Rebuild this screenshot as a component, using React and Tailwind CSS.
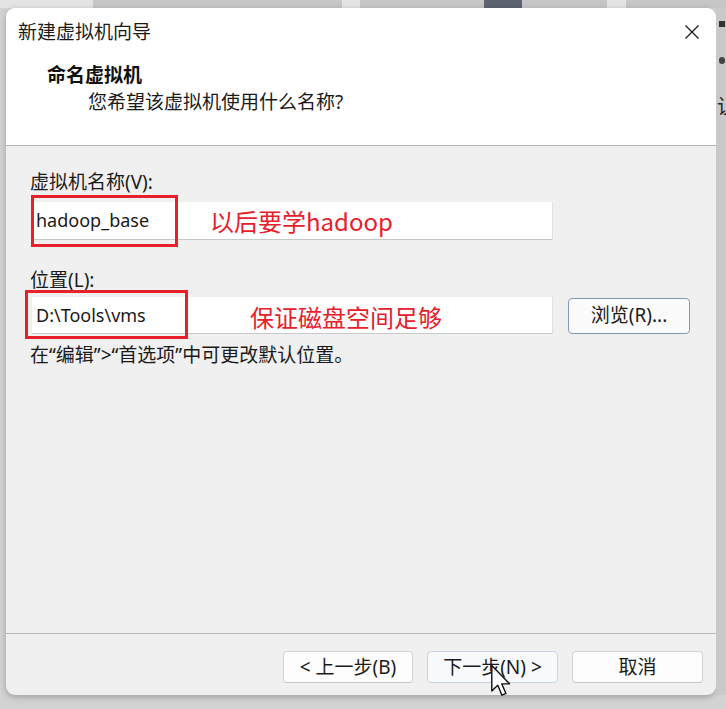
import React from "react";

const font = {
  fontFamily: '"Noto Sans", "Noto Sans CJK SC", sans-serif',
};

function Cursor() {
  return (
    <svg
      width="22"
      height="34"
      viewBox="0 0 15 24"
      className="absolute left-[490px] top-[664px]"
    >
      <path
        d="M1 1 L1 19 L5.2 15 L8.2 22 L11 20.8 L8 14 L13.5 14 Z"
        fill="#ffffff"
        stroke="#111111"
        strokeWidth="1"
        strokeLinejoin="round"
      />
    </svg>
  );
}

function FooterButton({ children, primary }) {
  return (
    <button
      className={
        primary
          ? "h-[32px] rounded-[4px] border border-[#c9d3df] bg-[#f7f9fc] text-[19px] text-[#1a1a1a] leading-none"
          : "h-[32px] rounded-[4px] border border-[#d3d3d3] border-b-[#c4c4c4] bg-[#fdfdfd] text-[19px] text-[#1a1a1a] leading-none"
      }
      style={font}
    >
      {children}
    </button>
  );
}

export default function App() {
  return (
    <div
      className="relative w-[726px] h-[709px] overflow-hidden bg-[#d3d3d3] flex flex-col"
      style={font}
    >
      {/* window behind the dialog */}
      <div className="h-[8px] flex bg-[#e4e4e4]">
        <div className="w-[93px]" />
        <div className="w-[249px] bg-[#c6c6c6]" />
        <div className="w-[18px]" />
        <div className="w-[247px] bg-[#c6c6c6] flex">
          <div className="w-[124px]" />
          <div className="w-[38px] bg-[#5c6270]" />
        </div>
        <div className="w-[19px]" />
        <div className="flex-1 bg-[#c6c6c6]" />
      </div>

      <div className="flex h-[687px]">
        <div className="w-[6px]" />
        <div className="w-[710px] flex flex-col rounded-[9px] overflow-hidden bg-[#f0f0f0] shadow-[0_2px_6px_rgba(0,0,0,0.25)]">
          {/* header */}
          <div className="h-[137px] bg-white flex flex-col">
            <div className="flex items-center justify-between pl-[12px] pr-[16px] h-[30px] mt-[9px]">
              <span className="text-[19px] text-[#1a1a1a] leading-none">
                新建虚拟机向导
              </span>
              <svg width="16" height="16" viewBox="0 0 16 16">
                <path
                  d="M1.5 1.5 L14.5 14.5 M14.5 1.5 L1.5 14.5"
                  stroke="#222"
                  strokeWidth="1.4"
                />
              </svg>
            </div>
            <div className="pl-[41px] mt-[16px] text-[19px] font-bold text-[#111] leading-[24px]">
              命名虚拟机
            </div>
            <div className="pl-[82px] mt-[3px] text-[19px] text-[#1a1a1a] leading-[24px]">
              您希望该虚拟机使用什么名称?
            </div>
          </div>
          <div className="h-px bg-[#b3b3b3]" />

          {/* body */}
          <div className="flex-1 px-[24px] flex flex-col">
            <div className="mt-[24px] text-[19px] text-[#1a1a1a] leading-[24px]">
              虚拟机名称(V):
            </div>
            <div className="relative mt-[8px] flex">
              <div className="w-[521px] h-[38px] ml-[2px] bg-white border-b border-b-[#c8c8c8] border-r border-r-[#e0e0e0] flex items-center pl-[4px] text-[18px] text-[#1a1a1a]">
                hadoop_base
              </div>
              <div className="absolute left-[1px] top-[-7px] w-[147px] h-[52px] border-[3px] border-[#e8202a]" />
              <div
                className="absolute left-[180px] top-[1px] text-[24px] text-[#e8202a] leading-[36px]"
                style={{ fontFamily: '"Noto Sans CJK SC", "Noto Sans", sans-serif' }}
              >
                以后要学hadoop
              </div>
            </div>

            <div className="mt-[28px] text-[19px] text-[#1a1a1a] leading-[24px]">
              位置(L):
            </div>
            <div className="relative mt-[5px] flex items-center">
              <div className="w-[521px] h-[37px] ml-[2px] bg-white border-b border-b-[#c8c8c8] border-r border-r-[#e0e0e0] flex items-center pl-[4px] text-[18px] text-[#1a1a1a]">
                D:\Tools\vms
              </div>
              <div className="absolute left-[-5px] top-[-7px] w-[163px] h-[49px] border-[3px] border-[#e8202a]" />
              <div
                className="absolute left-[220px] top-[2px] text-[24px] text-[#e8202a] leading-[36px]"
                style={{ fontFamily: '"Noto Sans CJK SC", "Noto Sans", sans-serif' }}
              >
                保证磁盘空间足够
              </div>
              <button className="ml-[15px] w-[122px] h-[36px] rounded-[4px] border border-[#7d9bb8] bg-[#fbfbfb] text-[19px] text-[#1a1a1a] leading-none">
                浏览(R)...
              </button>
            </div>

            <div className="mt-[9px] text-[19px] text-[#1a1a1a] leading-[24px]">
              在“编辑”&gt;“首选项”中可更改默认位置。
            </div>
          </div>

          <div className="h-px bg-[#b8b8b8]" />
          {/* footer */}
          <div className="h-[61px] flex items-start justify-end pt-[17px] pr-[13px] gap-[14px]">
            <div className="w-[130px] flex">
              <FooterButton>
                <span className="block w-[128px]">&lt; 上一步(B)</span>
              </FooterButton>
            </div>
            <div className="w-[131px] flex">
              <FooterButton primary>
                <span className="block w-[129px]">下一步(N) &gt;</span>
              </FooterButton>
            </div>
            <div className="w-[131px] flex">
              <FooterButton>
                <span className="block w-[129px]">取消</span>
              </FooterButton>
            </div>
          </div>
        </div>

        {/* right edge of the window behind */}
        <div className="flex-1 relative overflow-hidden bg-[#c9c9c9]">
          <div className="absolute left-[3px] top-[13px] w-[6px] h-[6px] bg-[#333]" />
          <div className="absolute left-[3px] top-[49px] w-[6px] h-[7px] rounded-full bg-[#444]" />
          <div
            className="absolute left-[1px] top-[88px] text-[20px] text-[#222] leading-none"
            style={{ fontFamily: '"Noto Sans CJK SC", serif' }}
          >
            让
          </div>
        </div>
      </div>
      <div className="flex-1" />
      <Cursor />
    </div>
  );
}
